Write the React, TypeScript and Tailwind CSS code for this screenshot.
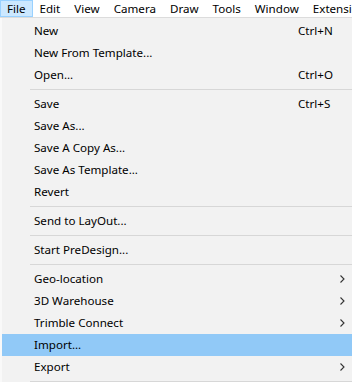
const MENUBAR = ["File", "Edit", "View", "Camera", "Draw", "Tools", "Window", "Extensions"];

type Entry =
  | { sep: true }
  | { label: string; shortcut?: string; sub?: boolean; active?: boolean; sep?: false };

const ENTRIES: Entry[] = [
  { label: "New", shortcut: "Ctrl+N" },
  { label: "New From Template..." },
  { label: "Open...", shortcut: "Ctrl+O" },
  { sep: true },
  { label: "Save", shortcut: "Ctrl+S" },
  { label: "Save As..." },
  { label: "Save A Copy As..." },
  { label: "Save As Template..." },
  { label: "Revert" },
  { sep: true },
  { label: "Send to LayOut..." },
  { sep: true },
  { label: "Start PreDesign..." },
  { sep: true },
  { label: "Geo-location", sub: true },
  { label: "3D Warehouse", sub: true },
  { label: "Trimble Connect", sub: true },
  { label: "Import...", active: true },
  { label: "Export", sub: true },
  { sep: true },
];

function Chevron() {
  return (
    <svg width="5" height="8" viewBox="0 0 5 8" className="block">
      <path d="M0.5 0.5 L4 4 L0.5 7.5" fill="none" stroke="#333" strokeWidth="1.1" />
    </svg>
  );
}

export default function App() {
  return (
    <div
      className="w-[352px] h-[382px] overflow-hidden bg-white text-[11.6px] text-black"
      style={{ fontFamily: '"Noto Sans", "Noto Sans CJK KR", sans-serif' }}
    >
      {/* Menu bar */}
      <div className="flex h-[18px] border-b border-[#dcdcdc] whitespace-nowrap">
        {MENUBAR.map((m, i) => (
          <div
            key={m}
            className={`flex items-center h-[17px] px-[6px] leading-none shrink-0 ${
              i === 0 ? "bg-[#cce8ff] border border-[#99d1ff]" : "border border-transparent"
            }`}
          >
            {m}
          </div>
        ))}
      </div>

      {/* Dropdown */}
      <div className="bg-[#f2f2f2] pt-[2px] border-l-[2px] border-[#f9f9f9]">
        {ENTRIES.map((e, i) =>
          e.sep ? (
            <div key={i} className="h-[7px] flex items-center pl-[28px]">
              <div className="h-px w-full bg-[#d7d7d7]" />
            </div>
          ) : (
            <div
              key={i}
              className={`h-[22px] flex items-center pl-[32px] whitespace-nowrap ${
                e.active ? "bg-[#91c9f7]" : ""
              }`}
            >
              <span className="w-[264px] shrink-0">{e.label}</span>
              <span className="w-[42px] shrink-0">{e.shortcut ?? ""}</span>
              {e.sub && <Chevron />}
            </div>
          )
        )}
      </div>
    </div>
  );
}
